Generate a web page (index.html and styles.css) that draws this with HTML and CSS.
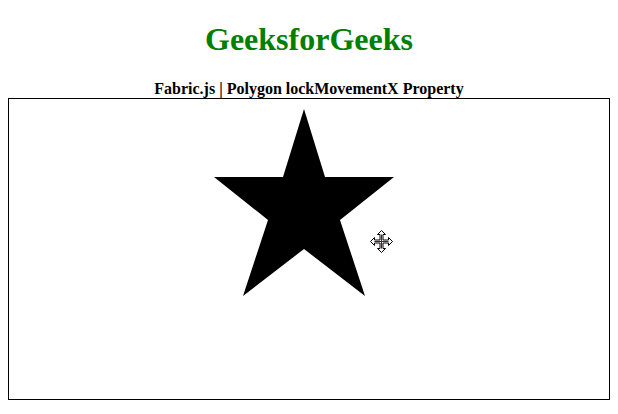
FILE: index.html
```html
<!DOCTYPE html>
<html>
<head>
<meta charset="utf-8">
<link rel="stylesheet" href="styles.css">
</head>
<body>
<div class="header">
  <h1 class="title">GeeksforGeeks</h1>
  <b class="subtitle">Fabric.js | Polygon lockMovementX Property</b>
</div>
<div class="canvas">
  <svg class="scene" width="600" height="300" viewBox="0 0 600 300">
    <polygon points="295,10 316,78 385,78 331,121 356,197 295,150 234,197 259,121 205,78 274,78" fill="#000"/>
  </svg>
  <svg class="cursor" width="23" height="23" viewBox="0 0 23 23">
    <polygon points="11.5,0.5 15.5,4.5 13,4.5 13,10 18.5,10 18.5,7.5 22.5,11.5 18.5,15.5 18.5,13 13,13 13,18.5 15.5,18.5 11.5,22.5 7.5,18.5 10,18.5 10,13 4.5,13 4.5,15.5 0.5,11.5 4.5,7.5 4.5,10 10,10 10,4.5 7.5,4.5" fill="#fff" stroke="#000" stroke-width="1"/>
    <path d="M11.5 4.5V18.5M4.5 11.5H18.5" stroke="#3a2a2a" stroke-width="1"/>
  </svg>
</div>
</body>
</html>
```
FILE: styles.css
```css
body {
  margin: 8px;
  font-family: "Liberation Serif", "Times New Roman", serif;
  background: #fff;
  color: #000;
}
.header {
  text-align: center;
}
.title {
  color: green;
  font-size: 32px;
  font-weight: bold;
  margin: 13.44px 0 21.44px;
}
.subtitle {
  font-size: 16px;
  font-weight: bold;
}
.canvas {
  position: relative;
  width: 600px;
  height: 300px;
  border: 1px solid #000;
}
.scene {
  display: block;
}
.cursor {
  position: absolute;
  left: 361px;
  top: 131px;
}
```
